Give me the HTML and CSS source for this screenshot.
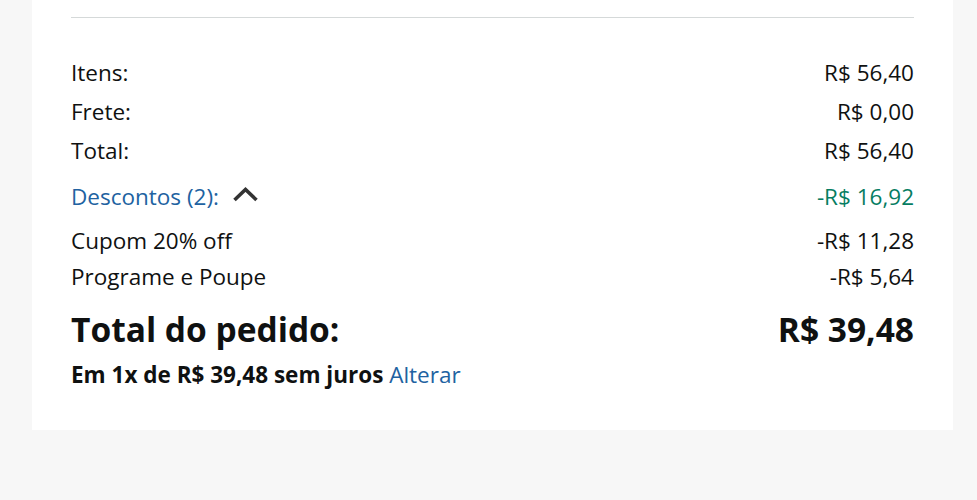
FILE: index.html
```html
<!DOCTYPE html>
<html lang="pt-BR">
<head>
    <meta charset="UTF-8">
    <meta name="viewport" content="width=device-width, initial-scale=1.0">
    <title>Resumo do pedido</title>
    <link rel="stylesheet" href="styles.css">
</head>
<body>
    <div class="summary-card">
        <hr class="divider">

        <div class="rows">
            <div class="row"><span>Itens:</span><span>R$ 56,40</span></div>
            <div class="row"><span>Frete:</span><span>R$ 0,00</span></div>
            <div class="row"><span>Total:</span><span>R$ 56,40</span></div>

            <div class="row discount-head">
                <span class="discount-toggle">
                    <a href="#" class="link">Descontos (2):</a>
                    <svg class="chevron" width="27" height="16" viewBox="0 0 27 16">
                        <path d="M2.5 14 L13.5 3.5 L24.5 14" fill="none" stroke="#333" stroke-width="3.6"/>
                    </svg>
                </span>
                <span class="green">-R$ 16,92</span>
            </div>

            <div class="row sub"><span>Cupom 20% off</span><span>-R$ 11,28</span></div>
            <div class="row sub"><span>Programe e Poupe</span><span>-R$ 5,64</span></div>
        </div>

        <div class="row grand-total"><span>Total do pedido:</span><span>R$ 39,48</span></div>
        <p class="installments">Em 1x de R$ 39,48 sem juros <a href="#" class="link">Alterar</a></p>
    </div>
</body>
</html>
```

FILE: styles.css
```css
body {
    margin: 0;
    background: #f7f7f7;
    font-family: "Open Sans", "Noto Sans", sans-serif;
    color: #0f1111;
}
.summary-card {
    width: 921px;
    margin-left: 32px;
    box-sizing: border-box;
    background: #fff;
    padding: 17px 39px 35px 39px;
}
.divider {
    border: 0;
    border-top: 1px solid #d5d9d9;
    margin: 0;
}
.rows {
    padding-top: 35px;
}
.row {
    display: flex;
    justify-content: space-between;
    align-items: center;
    font-size: 22.5px;
    line-height: 39px;
}
.link {
    color: #2162a1;
    text-decoration: none;
}
.green {
    color: #067d62;
}
.discount-head {
    line-height: 53px;
}
.discount-toggle {
    display: flex;
    align-items: center;
    gap: 13px;
}
.chevron {
    margin-top: -6px;
}
.sub {
    line-height: 36px;
}
.grand-total {
    font-weight: 700;
    font-size: 33.5px;
    line-height: 52px;
    margin-top: 8px;
}
.installments {
    margin: 0;
    font-size: 22.5px;
    font-weight: 700;
    line-height: 40px;
}
.installments .link {
    font-weight: 400;
}
```
